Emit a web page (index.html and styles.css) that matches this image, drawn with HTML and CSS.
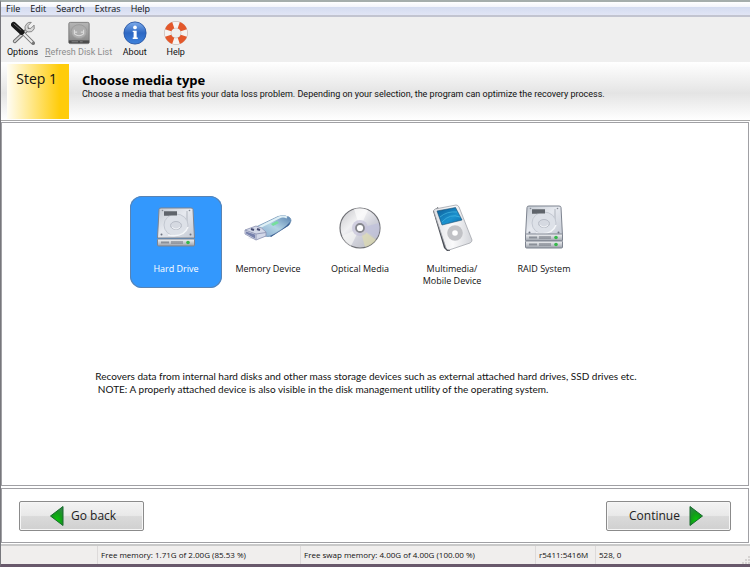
FILE: index.html
```html
<!DOCTYPE html>
<html lang="en">
<head>
<meta charset="utf-8">
<title>Data recovery - Choose media type</title>
<link rel="stylesheet" href="styles.css">
</head>
<body>
<svg class="defs" aria-hidden="true">
  <defs>
    <linearGradient id="metal" x1="0" y1="0" x2="1" y2="1"><stop offset="0" stop-color="#c3c9d1"/><stop offset=".45" stop-color="#e6e9ef"/><stop offset="1" stop-color="#c5cad4"/></linearGradient>
    <linearGradient id="front" x1="0" y1="0" x2="0" y2="1"><stop offset="0" stop-color="#f4f5f7"/><stop offset="1" stop-color="#9ba1aa"/></linearGradient>
    <linearGradient id="grey" x1="0" y1="0" x2="0" y2="1"><stop offset="0" stop-color="#b5b5b5"/><stop offset="1" stop-color="#858585"/></linearGradient>
    <linearGradient id="blue" x1="0" y1="0" x2="0" y2="1"><stop offset="0" stop-color="#7eaceb"/><stop offset=".5" stop-color="#2d68c4"/><stop offset="1" stop-color="#3f83dc"/></linearGradient>
    <linearGradient id="usb" x1="0" y1="1" x2="1" y2="0"><stop offset="0" stop-color="#7fa3cc"/><stop offset=".5" stop-color="#b4d4e4"/><stop offset="1" stop-color="#557fae"/></linearGradient>
    <linearGradient id="screen" x1="0" y1="0" x2="1" y2="1"><stop offset="0" stop-color="#0c5c96"/><stop offset=".6" stop-color="#1b92cf"/><stop offset="1" stop-color="#0d6dab"/></linearGradient>
    <linearGradient id="pod" x1="0" y1="0" x2="1" y2="0"><stop offset="0" stop-color="#dfe0e4"/><stop offset=".5" stop-color="#fafafb"/><stop offset="1" stop-color="#d3d5da"/></linearGradient>
    <linearGradient id="disc" x1="0" y1="0" x2="1" y2="1"><stop offset="0" stop-color="#c4c4c8"/><stop offset=".35" stop-color="#f0f0f2"/><stop offset=".6" stop-color="#d0d1da"/><stop offset="1" stop-color="#b5b6ba"/></linearGradient>
    <radialGradient id="green" cx=".5" cy=".75" r=".7"><stop offset="0" stop-color="#08c808"/><stop offset=".6" stop-color="#149a1c"/><stop offset="1" stop-color="#2d8743"/></radialGradient>
    <g id="drive-top">
      <path d="M7 4.500Q7 3 9 3H39Q41 3 41 4.500L42.500 33H5.500Z" fill="url(#metal)" stroke="#7d838f"/>
      <rect x="12" y="6.500" width="13" height="4" fill="#62676e"/><path d="M14 8.500h7" stroke="#82878e"/>
      <path d="M35 6v11" stroke="#b1b6bf"/>
      <ellipse cx="24" cy="20" rx="12" ry="11" fill="#dde1e8" stroke="#c3c8d1"/>
      <path d="M12 6.500h13v4h-13Z" fill="#5f646b"/>
      <path d="M16 30q16 3 20-8" fill="none" stroke="#f4f6f9" stroke-width="1.500"/>
      <ellipse cx="24" cy="20.500" rx="5.500" ry="4" fill="#d5d9e1" stroke="#b7bcc6"/>
      <path d="M20 22q4 4 8 0" fill="none" stroke="#f2f4f7"/>
      <circle cx="9.500" cy="29.500" r="1" fill="#6d7380"/><circle cx="38.500" cy="29.500" r="1" fill="#6d7380"/>
      <circle cx="10.500" cy="5.500" r=".8" fill="#858b95"/><circle cx="37.500" cy="5.500" r=".8" fill="#858b95"/>
    </g>
    <g id="drive-front">
      <rect x="5.500" y="0" width="37" height="7" rx="1" fill="url(#front)" stroke="#7d838f"/>
      <path d="M9 3.500h8" stroke="#8b9099" stroke-width="2"/><path d="M20 2v3M22 2v3M24 2v3M26 2v3M28 2v3M30 2v3" stroke="#6d727c"/>
      <circle cx="36" cy="3.500" r="1.800" fill="#35b84a"/>
    </g>
  </defs>
</svg>

<nav class="menu" aria-label="Main menu">
  <button>File</button><button>Edit</button><button>Search</button><button>Extras</button><button>Help</button>
</nav>

<div class="toolbar" role="toolbar" aria-label="Tools">
  <button class="tool">
    <svg viewBox="0 0 26 26" aria-hidden="true">
      <path d="M4 22L18 9" stroke="#666" stroke-width="4" stroke-linecap="round"/><path d="M4 22L18 9" stroke="#d4d4d4" stroke-width="2" stroke-linecap="round"/>
      <path d="M22 1.500L18.500 5v3h3L25 4.500Q26.500 9 22.500 11.500Q18 13 15.500 10Q14 6 17 3Q19 .8 22 1.500Z" fill="#d8d8d8" stroke="#686868" stroke-width=".8"/>
      <path d="M12 12l9 9 3 3" stroke="#777" stroke-width="4" stroke-linecap="round"/><path d="M13 13l10 10" stroke="#eee" stroke-width="2"/>
      <path d="M3 4l8.500 8" stroke="#181818" stroke-width="6" stroke-linecap="round"/><path d="M3 3l8 7" stroke="#777" stroke-width="1"/>
    </svg>
    <span>Options</span>
  </button>
  <button class="tool" disabled>
    <svg viewBox="0 0 26 26" aria-hidden="true">
      <rect x="2" y="1.500" width="22" height="23" rx="1.500" fill="url(#grey)" stroke="#7b7b7b"/>
      <ellipse cx="13" cy="11.500" rx="8.500" ry="7.500" fill="#adadad" stroke="#9a9a9a"/>
      <path d="M8 9.500v4.500q5 4 10 0V9.500M8 12h3m4 0h3" fill="none" stroke="#dcdcdc" stroke-width="1.200"/>
      <path d="M2 22.500h22" stroke="#4c4c4c" stroke-width="3"/><path d="M5 22.500h7m2 0h3" stroke="#888"/>
    </svg>
    <span><u>R</u>efresh Disk List</span>
  </button>
  <button class="tool">
    <svg viewBox="0 0 26 26" aria-hidden="true">
      <circle cx="13" cy="13" r="12" fill="url(#blue)" stroke="#2a58a5"/>
      <circle cx="13" cy="7" r="2" fill="#fff"/><path d="M10.500 10.500H14.800V18H16V19.500H10.500V18H11.500V12H10.500Z" fill="#fff"/>
    </svg>
    <span>About</span>
  </button>
  <button class="tool">
    <svg viewBox="0 0 26 26" aria-hidden="true">
      <circle cx="13" cy="13" r="9" fill="none" stroke="#b9a9a2" stroke-width="7.500"/>
      <circle cx="13" cy="13" r="9" fill="none" stroke="#f6f3f1" stroke-width="6.500"/>
      <g fill="none" stroke="#e3582b" stroke-width="7"><path d="M4.500 10A9 9 0 0 1 10 4.500M16 4.500A9 9 0 0 1 21.500 10M21.500 16A9 9 0 0 1 16 21.500M10 21.500A9 9 0 0 1 4.500 16"/></g>
    </svg>
    <span>Help</span>
  </button>
</div>

<header class="banner">
  <div class="step">Step 1</div>
  <div class="heading">
    <h1>Choose media type</h1>
    <p>Choose a media that best fits your data loss problem. Depending on your selection, the program can optimize the recovery process.</p>
  </div>
</header>

<main class="content">
  <div class="media" role="radiogroup" aria-label="Media type">
    <label class="option">
      <input type="radio" name="media" checked>
      <svg viewBox="0 0 48 48" aria-hidden="true"><use href="#drive-top" y="1"/><use href="#drive-front" y="35"/></svg>
      <span>Hard Drive</span>
    </label>
    <label class="option">
      <input type="radio" name="media">
      <svg viewBox="0 0 48 48" aria-hidden="true">
        <path d="M3 34Q25 37 46 18L46 14Q36 27 14 33Z" fill="#c6cbdf"/>
        <path d="M12 23L34 12.500Q39 10.500 45 13Q49 15.500 45 21L27 32Q23 34 18 30Z" fill="url(#usb)" stroke="#7294b6" stroke-width=".8"/>
        <path d="M26 32Q38 27 46 18V16Q47 19 44 22L27 33Z" fill="#395e91"/>
        <path d="M15 23.500L35 13.500Q39 11.500 43 13.500" fill="none" stroke="#deeff5" stroke-width="2"/>
        <path d="M27 20l6-3 2 2-6 3Z" fill="#75df9c"/>
        <path d="M1 26L12 22Q18 23 22 28V32L12 36L1 30Z" fill="#d3d8e8" stroke="#8a90b0" stroke-width=".8"/>
        <path d="M1 26L12 30L22 28.500M12 30V36" fill="none" stroke="#959bb9"/>
        <path d="M7 25l3 1M13 25l3 1" stroke="#454c72" stroke-width="2"/><path d="M2 27.500l9 3v4l-9-5Z" fill="#7781ac"/>
      </svg>
      <span>Memory Device</span>
    </label>
    <label class="option">
      <input type="radio" name="media">
      <svg viewBox="0 0 48 48" aria-hidden="true">
        <circle cx="24" cy="24" r="20" fill="url(#disc)" stroke="#6f7075" stroke-width="1.200"/>
        <path d="M24 24L18 5A20 20 0 0 1 32 6Z" fill="#fff" opacity=".6"/>
        <path d="M24 24L43 19A20 20 0 0 1 41 34Z" fill="#bfc0dc" opacity=".7"/>
        <path d="M24 24L40 36A20 20 0 0 1 29 43Z" fill="#e2dfaa" opacity=".6"/>
        <path d="M24 24L15 42A20 20 0 0 1 6 32Z" fill="#f5f5f3" opacity=".7"/>
        <circle cx="24" cy="24" r="8" fill="#c5c2d9" opacity=".7"/>
        <circle cx="24" cy="24" r="4" fill="#fff" stroke="#85868c" stroke-width="1.800"/>
      </svg>
      <span>Optical Media</span>
    </label>
    <label class="option">
      <input type="radio" name="media">
      <svg viewBox="0 0 48 48" aria-hidden="true">
        <path d="M5 7L10 3L22 47L19 47L16 44Z" fill="#484c54"/>
        <path d="M7 5L28 1Q30 1 31 3L44 36Q44 38 42 39L21 46Q19 46 18 44L6 8Q5 6 7 5Z" fill="url(#pod)" stroke="#a3a6ac" stroke-width=".8"/>
        <path d="M9 7L27.500 3.500L34 16L14 21Z" fill="url(#screen)" stroke="#174d71" stroke-width=".6"/>
        <path d="M12 13Q19 7 29 8M14 18Q22 9 32 13" fill="none" stroke="#51c1e7" stroke-width=".6"/>
        <circle cx="27" cy="29" r="7.800" fill="#c1c2c6"/><circle cx="27" cy="29" r="2.800" fill="#fff"/>
      </svg>
      <span>Multimedia/<br>Mobile Device</span>
    </label>
    <label class="option">
      <input type="radio" name="media">
      <svg viewBox="0 0 48 48" aria-hidden="true"><use href="#drive-top" y="-1"/><use href="#drive-front" y="30"/><use href="#drive-front" y="37"/></svg>
      <span>RAID System</span>
    </label>
  </div>
  <p class="info">Recovers data from internal hard disks and other mass storage devices such as external attached hard drives, SSD drives etc.<br>&nbsp;NOTE: A properly attached device is also visible in the disk management utility of the operating system.</p>
</main>

<div class="actions">
  <button class="nav-button"><svg viewBox="0 0 14 20" aria-hidden="true"><path d="M13 .5V19.500L.5 10Z" fill="url(#green)" stroke="#17692b"/></svg>Go back</button>
  <button class="nav-button next">Continue<svg viewBox="0 0 14 20" aria-hidden="true"><path d="M1 .5V19.500L13.500 10Z" fill="url(#green)" stroke="#17692b"/></svg></button>
</div>

<footer class="status">
  <span></span><span>Free memory: 1.71G of 2.00G (85.53 %)</span><span>Free swap memory: 4.00G of 4.00G (100.00 %)</span><span>r5411:5416M</span><span>528, 0</span>
  <svg class="grip" viewBox="0 0 8 8" aria-hidden="true"><path d="M6 0h2v2H6ZM6 3h2v2H6ZM6 6h2v2H6ZM3 3h2v2H3ZM3 6h2v2H3ZM0 6h2v2H0Z" fill="#d6d3d2"/></svg>
</footer>
</body>
</html>
```
FILE: styles.css
```css
* { box-sizing: border-box; }

body {
  margin: 0;
  min-height: 100vh;
  display: flex;
  flex-direction: column;
  background: #fff;
  border-top: 2px solid #a5aeac;
  border-left: 1px solid #77777c;
  border-bottom: 3px solid #68586b;
  color: #111;
  font: 9px/12px "Open Sans", "Noto Sans", sans-serif;
}

h1, p { margin: 0; }
button { font: inherit; color: inherit; }
.defs { position: absolute; width: 0; height: 0; }

.menu {
  display: flex;
  height: 15px;
  border-bottom: 2px solid #c2c4d0;
  background: linear-gradient(#fff, #f3f5fb 35%, #d4dcf0 40%, #e1e5f5);
}
.menu button { padding: 0 5px; border: 0; background: none; }

.toolbar {
  display: flex;
  gap: 4px;
  height: 45px;
  padding: 4px 3px 0;
  background: #efefef;
  font-family: Roboto, "Open Sans", sans-serif;
}
.tool {
  display: flex;
  flex-direction: column;
  align-items: center;
  min-width: 37px;
  padding: 0;
  border: 0;
  background: none;
}
.tool svg { width: 24px; height: 24px; margin-bottom: 1px; }
.tool:disabled { color: #8c8c8c; }

.banner {
  display: flex;
  height: 59px;
  padding: 2px 0 1px 6px;
  border-bottom: 1px solid #a7a7a7;
  background: linear-gradient(#fff, #e4e4e4 54%, #fff);
}
.step {
  width: 62px;
  padding: 6px 12px 0 0;
  background: linear-gradient(90deg, #fffdf5, #ffe88c 38%, #ffcc0a 85%);
  font-size: 14px;
  line-height: 18px;
  text-align: right;
}
.heading { padding: 8px 0 0 13px; }
.heading p { font-family: Roboto, "Open Sans", sans-serif; }
h1 { font-size: 13px; line-height: 16px; color: #000; }

.content {
  flex: 1;
  display: flex;
  flex-direction: column;
  align-items: center;
  margin: 1px 1px 2px 0;
  padding-top: 73px;
  border: 1px solid #a0a0a4;
}
.media {
  display: grid;
  grid-template-columns: repeat(5, 92px);
  margin-right: 30px;
}
.option {
  display: flex;
  flex-direction: column;
  align-items: center;
  height: 92px;
  padding-top: 8px;
  border-radius: 12px;
  text-align: center;
}
.option input { position: absolute; opacity: 0; }
.option svg { width: 48px; height: 48px; margin-bottom: 11px; }
.option:has(input:checked) {
  background: #3398fd;
  box-shadow: inset 0 0 0 1px #5a83b2;
  color: #fff;
}
.info {
  width: 75%;
  margin-top: 82px;
  font-family: Lato, "Open Sans", sans-serif;
  font-size: 10px;
  line-height: 13px;
}

.actions {
  display: flex;
  justify-content: space-between;
  align-items: center;
  height: 55px;
  margin-right: 1px;
  padding: 0 17px;
  border: 1px solid #a0a0a4;
}
.nav-button {
  display: flex;
  align-items: center;
  gap: 7px;
  width: 125px;
  height: 30px;
  padding: 0 30px;
  border: 1px solid #8b8b8b;
  border-radius: 2px;
  background: linear-gradient(#f3f3f3, #e9e9e9 48%, #dadada 52%, #d0d0d0);
  box-shadow: inset 0 0 0 1px #f6f6f6;
  color: #222;
  font-size: 12px;
  white-space: nowrap;
}
.next { gap: 9px; padding: 0 22px; }
.nav-button svg { flex: none; width: 14px; height: 20px; }

.status {
  display: grid;
  grid-template-columns: 96px 203px 235px 60px 1fr 8px;
  align-items: center;
  height: 20px;
  margin-top: 1px;
  border-top: 2px solid #c9c9c9;
  background: #f0eeed;
  font-size: 8px;
  line-height: 18px;
  white-space: nowrap;
}
.status span + span { padding-left: 3px; border-left: 1px solid #dddada; }
.grip { width: 8px; align-self: end; }
```
